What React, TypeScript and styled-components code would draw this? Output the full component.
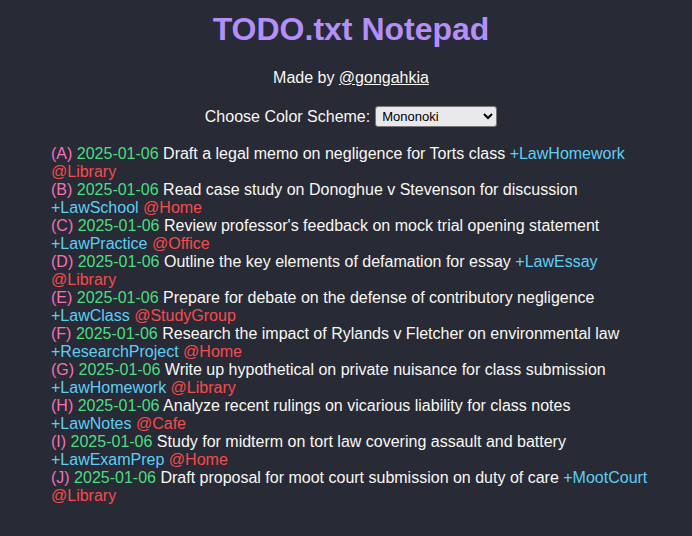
import { FC } from "react";
import styled, { createGlobalStyle } from "styled-components";

interface Todo {
  priority: string;
  date: string;
  text: string;
  project: string;
  context: string;
}

const todos: Todo[] = [
  { priority: "A", date: "2025-01-06", text: "Draft a legal memo on negligence for Torts class", project: "LawHomework", context: "Library" },
  { priority: "B", date: "2025-01-06", text: "Read case study on Donoghue v Stevenson for discussion", project: "LawSchool", context: "Home" },
  { priority: "C", date: "2025-01-06", text: "Review professor's feedback on mock trial opening statement", project: "LawPractice", context: "Office" },
  { priority: "D", date: "2025-01-06", text: "Outline the key elements of defamation for essay", project: "LawEssay", context: "Library" },
  { priority: "E", date: "2025-01-06", text: "Prepare for debate on the defense of contributory negligence", project: "LawClass", context: "StudyGroup" },
  { priority: "F", date: "2025-01-06", text: "Research the impact of Rylands v Fletcher on environmental law", project: "ResearchProject", context: "Home" },
  { priority: "G", date: "2025-01-06", text: "Write up hypothetical on private nuisance for class submission", project: "LawHomework", context: "Library" },
  { priority: "H", date: "2025-01-06", text: "Analyze recent rulings on vicarious liability for class notes", project: "LawNotes", context: "Cafe" },
  { priority: "I", date: "2025-01-06", text: "Study for midterm on tort law covering assault and battery", project: "LawExamPrep", context: "Home" },
  { priority: "J", date: "2025-01-06", text: "Draft proposal for moot court submission on duty of care", project: "MootCourt", context: "Library" },
];

const GlobalStyle = createGlobalStyle`
  html, body {
    margin: 0;
    background: #282a36;
  }
  body {
    font-family: "Liberation Sans", Arial, sans-serif;
    color: #f8f8f2;
  }
`;

const App: FC = () => {
  return (
    <>
      <GlobalStyle />
      <Page>
        <Title>TODO.txt Notepad</Title>
        <Credit>
          Made by <CreditLink href="#">@gongahkia</CreditLink>
        </Credit>
        <SchemeRow>
          <label htmlFor="scheme">Choose Color Scheme:</label>
          <SchemeSelect id="scheme" defaultValue="mononoki">
            <option value="mononoki">Mononoki</option>
            <option value="dracula">Dracula</option>
            <option value="solarized">Solarized</option>
          </SchemeSelect>
        </SchemeRow>
        <TodoList>
          {todos.map((todo) => (
            <TodoLine key={todo.priority}>
              <Priority>({todo.priority})</Priority> <DateTag>{todo.date}</DateTag> {todo.text}{" "}
              <Project>+{todo.project}</Project> <Context>@{todo.context}</Context>
            </TodoLine>
          ))}
        </TodoList>
      </Page>
    </>
  );
};

const Page = styled.div`
  display: flex;
  flex-direction: column;
  align-items: center;
  padding: 11px 0 0 10px;
`;

const Title = styled.h1`
  margin: 0;
  font-size: 32px;
  line-height: 37px;
  font-weight: bold;
  color: #b48ef9;
`;

const Credit = styled.p`
  margin: 21px 0 0;
  font-size: 16px;
  line-height: 18px;
`;

const CreditLink = styled.a`
  color: #f8f8f2;
  text-decoration: underline;
`;

const SchemeRow = styled.div`
  display: flex;
  align-items: center;
  gap: 5px;
  margin-top: 19px;
  font-size: 16px;
  line-height: 18px;
`;

const SchemeSelect = styled.select`
  width: 122px;
  height: 21px;
  padding: 0 2px;
  font-family: "Liberation Sans", Arial, sans-serif;
  font-size: 13px;
  color: #000;
  background: #e9e9ed;
  border: 1px solid #767676;
  border-radius: 3px;
`;

const TodoList = styled.div`
  align-self: flex-start;
  width: 600px;
  margin: 18px 0 0 41px;
  font-size: 16px;
  line-height: 18px;
`;

const TodoLine = styled.div``;

const Priority = styled.span`
  color: #f472b6;
`;

const DateTag = styled.span`
  color: #4ade80;
`;

const Project = styled.span`
  color: #5ccff5;
`;

const Context = styled.span`
  color: #f84b4b;
`;

export default App;
